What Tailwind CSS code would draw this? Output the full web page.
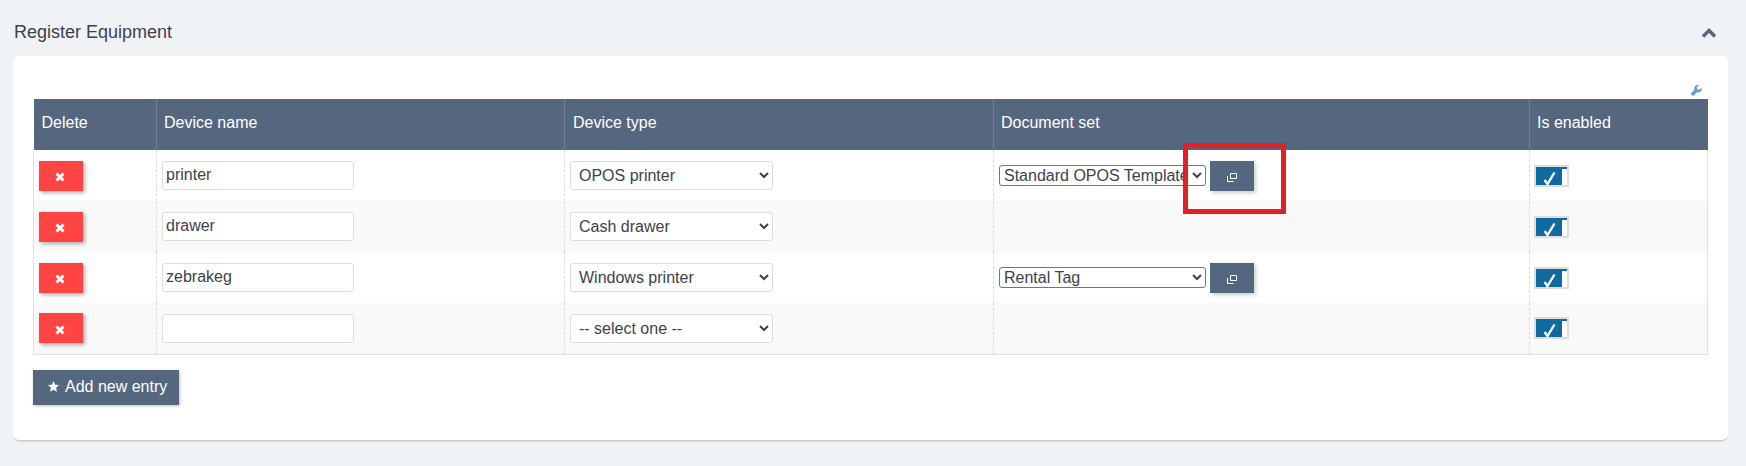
<!DOCTYPE html>
<html>
<head>
<meta charset="utf-8">
<script src="https://cdn.jsdelivr.net/npm/@tailwindcss/browser@4"></script>
</head>
<body class="bg-[#eff3f6] font-['Liberation_Sans',Arial,sans-serif] text-[#3d4249] h-[466px] w-[1746px] overflow-hidden relative">
<div class="pt-[20px] pl-[14px] pr-[18px] h-[56px] flex justify-between items-start">
  <h2 class="text-[18px] leading-[24px] font-normal">Register Equipment</h2>
  <svg class="w-[16px] h-[12px] mt-[7px] mr-[11px]" viewBox="0 0 16 12"><path d="M2 9.500 L8 3.500 L14 9.500" fill="none" stroke="#55667f" stroke-width="3.500"/></svg>
</div>
<div class="ml-[13px] w-[1715px] h-[385px] bg-white rounded-[6px] border-b border-[#c9cccf] shadow-[0_1px_1px_rgba(0,0,0,0.08)] pt-[29px] px-[20px] relative">
  <div class="h-[14px] flex justify-end">
    <svg class="w-[11px] h-[11px] mr-[6px]" viewBox="0 0 24 24"><path d="M22.700 6.200 18.300 10.600 13.800 9.400 12.600 4.900 17 .6C14.400-.4 11.300.1 9.200 2.200 7 4.400 6.500 7.600 7.800 10.300L.8 17.300C-.3 18.400-.3 20.200.8 21.400L2 22.600C3.200 23.700 5 23.700 6.100 22.600L13.100 15.600C15.800 16.800 19 16.300 21.200 14.100 23.300 12 23.700 8.800 22.700 6.200Z" fill="#6c9bd0"/></svg>
  </div>
  <table class="table-fixed border-collapse w-[1674px]">
    <colgroup><col class="w-[123px]"><col class="w-[408px]"><col class="w-[429px]"><col class="w-[536px]"><col class="w-[178px]"></colgroup>
    <thead>
      <tr class="h-[51px] bg-[#55667f] text-white text-[16px] text-left">
        <th class="font-normal pl-[8px] pb-[3px] border-r border-[#6f7f96]">Delete</th>
        <th class="font-normal pl-[7px] pb-[3px] border-r border-[#6f7f96]">Device name</th>
        <th class="font-normal pl-[8px] pb-[3px] border-r border-[#6f7f96]">Device type</th>
        <th class="font-normal pl-[7px] pb-[3px] border-r border-[#6f7f96]">Document set</th>
        <th class="font-normal pl-[7px] pb-[3px]">Is enabled</th>
      </tr>
    </thead>
    <tbody class="text-[16px]">
      <tr class="h-[51px] bg-white">
        <td class="pl-[5px] border-l border-[#dfe1e3] border-r border-r-[#dddddd] border-dashed [border-left-style:solid]"><button class="w-[44px] h-[30px] bg-[#ff4444] shadow-[2px_2px_4px_rgba(0,0,0,0.3)] flex items-center justify-center pt-[3px] pr-[2px]"><svg class="w-[10px] h-[10px]" viewBox="0 0 10 10"><path d="M1.500 1.500 8.500 8.500M8.500 1.500 1.500 8.500" stroke="#fff" stroke-width="3" fill="none"/></svg></button></td>
        <td class="pl-[5px] border-r border-dashed border-[#dddddd]"><input value="printer" class="block w-[192px] h-[29px] bg-white border border-[#dddddd] rounded-[3px] px-[3px] pb-[2px]"></td>
        <td class="pl-[5px] border-r border-dashed border-[#dddddd]"><select class="block w-[203px] h-[29px] bg-white border border-[#dddddd] rounded-[3px] px-[4px]"><option>OPOS printer</option></select></td>
        <td class="pl-[5px] border-r border-dashed border-[#dddddd]"><div class="flex items-center gap-[4px]"><select class="block w-[207px] h-[21px] bg-white border border-[#767676] rounded-[3px] -mt-[1px]"><option>Standard OPOS Template</option></select><button class="w-[44px] h-[30px] bg-[#55667f] shadow-[2px_2px_4px_rgba(0,0,0,0.2)] flex items-center justify-center pt-[3px]"><svg class="w-[10px] h-[9px]" viewBox="0 0 10 9"><path d="M3.500 .5h6v5h-6zM.5 3v5.500h6" fill="none" stroke="#fff"/></svg></button></div></td>
        <td class="pl-[4px] border-r border-[#dfe1e3]"><div class="relative w-[35px] h-[22px] border-[2px] border-[#dddddd] bg-white"><div class="absolute left-0 top-0 w-[26px] h-[18px] bg-[#0e6a9f]"></div><div class="absolute top-0 left-[26px] w-[5px] h-[2px] bg-[#0e6a9f]"></div><svg class="absolute left-[7px] top-[4px] w-[13px] h-[15px]" viewBox="0 0 13 15"><path d="M1.500 9 4.500 13 11.500 1.500" fill="none" stroke="#fff" stroke-width="2.400"/></svg></div></td>
      </tr>
      <tr class="h-[51px] bg-[#f9f9f9]">
        <td class="pl-[5px] border-l border-[#dfe1e3] border-r border-r-[#dddddd] border-dashed [border-left-style:solid]"><button class="w-[44px] h-[30px] bg-[#ff4444] shadow-[2px_2px_4px_rgba(0,0,0,0.3)] flex items-center justify-center pt-[3px] pr-[2px]"><svg class="w-[10px] h-[10px]" viewBox="0 0 10 10"><path d="M1.500 1.500 8.500 8.500M8.500 1.500 1.500 8.500" stroke="#fff" stroke-width="3" fill="none"/></svg></button></td>
        <td class="pl-[5px] border-r border-dashed border-[#dddddd]"><input value="drawer" class="block w-[192px] h-[29px] bg-white border border-[#dddddd] rounded-[3px] px-[3px] pb-[2px]"></td>
        <td class="pl-[5px] border-r border-dashed border-[#dddddd]"><select class="block w-[203px] h-[29px] bg-white border border-[#dddddd] rounded-[3px] px-[4px]"><option>Cash drawer</option></select></td>
        <td class="pl-[5px] border-r border-dashed border-[#dddddd]"></td>
        <td class="pl-[4px] border-r border-[#dfe1e3]"><div class="relative w-[35px] h-[22px] border-[2px] border-[#dddddd] bg-white"><div class="absolute left-0 top-0 w-[26px] h-[18px] bg-[#0e6a9f]"></div><div class="absolute top-0 left-[26px] w-[5px] h-[2px] bg-[#0e6a9f]"></div><svg class="absolute left-[7px] top-[4px] w-[13px] h-[15px]" viewBox="0 0 13 15"><path d="M1.500 9 4.500 13 11.500 1.500" fill="none" stroke="#fff" stroke-width="2.400"/></svg></div></td>
      </tr>
      <tr class="h-[51px] bg-white">
        <td class="pl-[5px] border-l border-[#dfe1e3] border-r border-r-[#dddddd] border-dashed [border-left-style:solid]"><button class="w-[44px] h-[30px] bg-[#ff4444] shadow-[2px_2px_4px_rgba(0,0,0,0.3)] flex items-center justify-center pt-[3px] pr-[2px]"><svg class="w-[10px] h-[10px]" viewBox="0 0 10 10"><path d="M1.500 1.500 8.500 8.500M8.500 1.500 1.500 8.500" stroke="#fff" stroke-width="3" fill="none"/></svg></button></td>
        <td class="pl-[5px] border-r border-dashed border-[#dddddd]"><input value="zebrakeg" class="block w-[192px] h-[29px] bg-white border border-[#dddddd] rounded-[3px] px-[3px] pb-[2px]"></td>
        <td class="pl-[5px] border-r border-dashed border-[#dddddd]"><select class="block w-[203px] h-[29px] bg-white border border-[#dddddd] rounded-[3px] px-[4px]"><option>Windows printer</option></select></td>
        <td class="pl-[5px] border-r border-dashed border-[#dddddd]"><div class="flex items-center gap-[4px]"><select class="block w-[207px] h-[21px] bg-white border border-[#767676] rounded-[3px] -mt-[1px]"><option>Rental Tag</option></select><button class="w-[44px] h-[30px] bg-[#55667f] shadow-[2px_2px_4px_rgba(0,0,0,0.2)] flex items-center justify-center pt-[3px]"><svg class="w-[10px] h-[9px]" viewBox="0 0 10 9"><path d="M3.500 .5h6v5h-6zM.5 3v5.500h6" fill="none" stroke="#fff"/></svg></button></div></td>
        <td class="pl-[4px] border-r border-[#dfe1e3]"><div class="relative w-[35px] h-[22px] border-[2px] border-[#dddddd] bg-white"><div class="absolute left-0 top-0 w-[26px] h-[18px] bg-[#0e6a9f]"></div><div class="absolute top-0 left-[26px] w-[5px] h-[2px] bg-[#0e6a9f]"></div><svg class="absolute left-[7px] top-[4px] w-[13px] h-[15px]" viewBox="0 0 13 15"><path d="M1.500 9 4.500 13 11.500 1.500" fill="none" stroke="#fff" stroke-width="2.400"/></svg></div></td>
      </tr>
      <tr class="h-[51px] bg-[#f9f9f9] border-b border-[#dfe1e3]">
        <td class="pl-[5px] border-l border-[#dfe1e3] border-r border-r-[#dddddd] border-dashed [border-left-style:solid]"><button class="w-[44px] h-[30px] bg-[#ff4444] shadow-[2px_2px_4px_rgba(0,0,0,0.3)] flex items-center justify-center pt-[3px] pr-[2px]"><svg class="w-[10px] h-[10px]" viewBox="0 0 10 10"><path d="M1.500 1.500 8.500 8.500M8.500 1.500 1.500 8.500" stroke="#fff" stroke-width="3" fill="none"/></svg></button></td>
        <td class="pl-[5px] border-r border-dashed border-[#dddddd]"><input value="" class="block w-[192px] h-[29px] bg-white border border-[#dddddd] rounded-[3px] px-[3px] pb-[2px]"></td>
        <td class="pl-[5px] border-r border-dashed border-[#dddddd]"><select class="block w-[203px] h-[29px] bg-white border border-[#dddddd] rounded-[3px] px-[4px]"><option>-- select one --</option></select></td>
        <td class="pl-[5px] border-r border-dashed border-[#dddddd]"></td>
        <td class="pl-[4px] border-r border-[#dfe1e3]"><div class="relative w-[35px] h-[22px] border-[2px] border-[#dddddd] bg-white"><div class="absolute left-0 top-0 w-[26px] h-[18px] bg-[#0e6a9f]"></div><div class="absolute top-0 left-[26px] w-[5px] h-[2px] bg-[#0e6a9f]"></div><svg class="absolute left-[7px] top-[4px] w-[13px] h-[15px]" viewBox="0 0 13 15"><path d="M1.500 9 4.500 13 11.500 1.500" fill="none" stroke="#fff" stroke-width="2.400"/></svg></div></td>
      </tr>
    </tbody>
  </table>
  <button class="mt-[15px] w-[146px] h-[35px] bg-[#55667f] text-white text-[16px] shadow-[1px_1px_3px_rgba(0,0,0,0.25)] flex items-center pl-[15px] gap-[6px] pb-[1px]">
    <svg class="w-[11px] h-[11px] mb-[1px]" viewBox="0 0 10 10"><path d="M5 0 6.500 3.300 10 3.700 7.400 6.100 8.100 9.700 5 7.900 1.900 9.700 2.600 6.100 0 3.700 3.500 3.300Z" fill="#fff"/></svg>
    <span>Add new entry</span>
  </button>
</div>
<div class="absolute left-[1183px] top-[143px] w-[103px] h-[71px] border-[5px] border-[#e31e24]"></div>
</body>
</html>
